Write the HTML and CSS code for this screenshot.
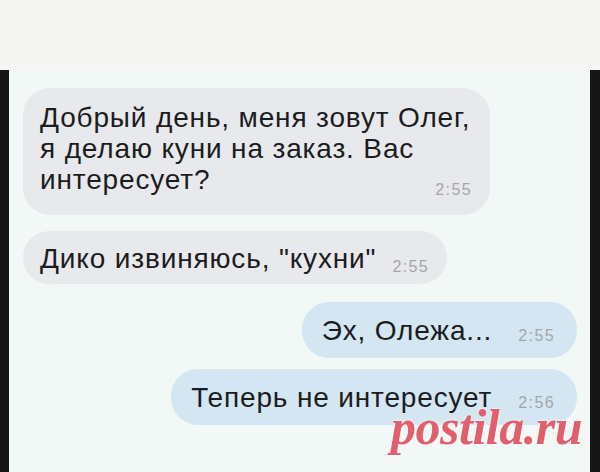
FILE: index.html
```html
<!DOCTYPE html>
<html lang="ru">

<head>
  <meta charset="UTF-8" />
  <meta name="viewport" content="width=device-width, initial-scale=1.0" />
  <title>Олег</title>
  <link rel="stylesheet" href="styles.css">
</head>

<body>
  <div class="top"></div>
  <div class="screen">
    <div class="edge left"></div>
    <div class="chat">
      <div class="bubble in first">
        Добрый день, меня зовут Олег,<br>
        я делаю куни на заказ. Вас<br>
        <span class="time">2:55</span>интересует?
      </div>
      <div class="bubble in second">
        Дико извиняюсь, "кухни"<span class="time">2:55</span>
      </div>
      <div class="bubble out third">
        Эх, Олежа...<span class="time">2:55</span>
      </div>
      <div class="bubble out fourth">
        Теперь не интересует<span class="time">2:56</span>
      </div>
      <div class="mark">postila.ru</div>
    </div>
    <div class="edge right"></div>
  </div>
</body>

</html>
```

FILE: styles.css
```css
:root {
  --incoming: #e8e9ec;
  --outgoing: #d3e6f1;
  --chat-bg: #f2f8f5;
  --time-grey: #a3a7ab;
}

body {
  margin: 0;
  font-family: 'Liberation Sans', Arial, sans-serif;
  background-color: #f5f5f3;
  color: #1c1c1e;
  overflow: hidden;
}

.top {
  height: 70px;
  background-color: #f5f5f3;
}

.screen {
  display: flex;
  height: 402px;
}

.edge {
  background-color: #161616;
}

.edge.left {
  width: 9px;
}

.edge.right {
  width: 10px;
}

.chat {
  position: relative;
  flex: 1;
  display: flex;
  flex-direction: column;
  padding: 18px 13px 0 14px;
  background-color: var(--chat-bg);
}

.bubble {
  font-size: 28px;
  letter-spacing: 0.85px;
  line-height: 31px;
  padding: 12px 18px 9px 17px;
  border-radius: 27px;
  white-space: nowrap;
}

.bubble.in {
  align-self: flex-start;
  background-color: var(--incoming);
}

.bubble.out {
  align-self: flex-end;
  background-color: var(--outgoing);
  padding: 13px 22px 12px 20px;
}

.first {
  width: 432px;
  padding-top: 14px;
  padding-bottom: 17px;
}

.second {
  margin-top: 16px;
}

.second .time {
  margin-left: 16px;
}

.third {
  margin-top: 18px;
}

.fourth {
  margin-top: 11px;
}

.time {
  display: inline-block;
  margin-left: 14px;
  font-size: 16px;
  letter-spacing: 1.4px;
  line-height: 16px;
  color: var(--time-grey);
  vertical-align: -4px;
}

.out .time {
  margin-left: 26px;
  vertical-align: -1px;
}

.first .time {
  float: right;
  margin-top: 18px;
}

.mark {
  position: absolute;
  top: 332px;
  right: 8px;
  font-family: 'Liberation Serif', serif;
  font-style: italic;
  font-weight: bold;
  font-size: 50px;
  line-height: 50px;
  letter-spacing: -0.5px;
  color: #e0606d;
  text-shadow: 0 0 3px #fff;
}
```
